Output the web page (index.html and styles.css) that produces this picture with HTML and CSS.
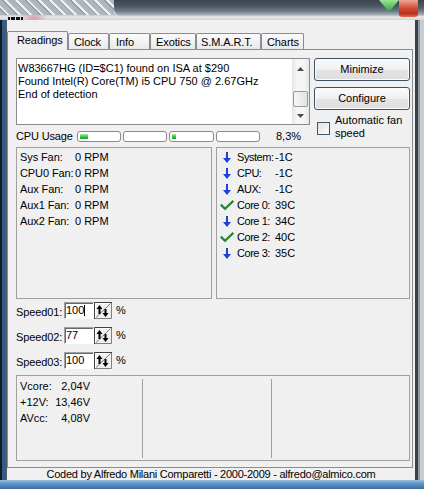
FILE: index.html
```html
<!DOCTYPE html>
<html>
<head>
<meta charset="utf-8">
<title>SpeedFan</title>
<link rel="stylesheet" href="styles.css">
</head>
<body>
<div class="screen">
  <div class="titlebar">
    <div class="glass"><div class="stripes"></div><div class="sysicon"></div></div>
    <div class="darkbar"></div>
    <div class="caption"><span class="gem"></span><span class="closebtn"></span></div>
  </div>
  <div class="middle">
    <div class="frame-left"></div>
    <div class="client">
      <div class="tabs">
        <div class="tab active w-readings">Readings</div>
        <div class="tab w-clock">Clock</div>
        <div class="tab w-info">Info</div>
        <div class="tab w-exotics">Exotics</div>
        <div class="tab w-smart">S.M.A.R.T.</div>
        <div class="tab w-charts">Charts</div>
      </div>
      <div class="sheet">
        <div class="top">
          <div class="leftcol">
            <div class="memo">
              <div class="memo-text">W83667HG (ID=$C1) found on ISA at $290<br>Found Intel(R) Core(TM) i5 CPU 750 @ 2.67GHz<br>End of detection</div>
              <div class="vscroll">
                <div class="sb-up"><svg width="7" height="4" viewBox="0 0 7 4"><path d="M0 4L3.5 0L7 4Z" fill="#4a4a4a"/></svg></div>
                <div class="sb-track"><div class="sb-thumb"></div></div>
                <div class="sb-down"><svg width="7" height="4" viewBox="0 0 7 4"><path d="M0 0L3.5 4L7 0Z" fill="#4a4a4a"/></svg></div>
              </div>
            </div>
            <div class="cpu">
              <span class="cpu-label">CPU Usage</span>
              <div class="bars">
                <div class="bar"><div class="fill" style="width:8px"></div></div>
                <div class="bar"></div>
                <div class="bar wide"><div class="fill" style="width:4px"></div></div>
                <div class="bar"></div>
              </div>
              <span class="pct">8,3%</span>
            </div>
          </div>
          <div class="rightcol">
            <div class="btn">Minimize</div>
            <div class="btn">Configure</div>
            <div class="auto"><span class="chk"></span><span class="auto-label">Automatic fan<br>speed</span></div>
          </div>
        </div>

        <div class="panels">
          <div class="group fans">
            <div class="row"><span class="fl">Sys Fan:</span><span>0 RPM</span></div>
            <div class="row"><span class="fl">CPU0 Fan:</span><span>0 RPM</span></div>
            <div class="row"><span class="fl">Aux Fan:</span><span>0 RPM</span></div>
            <div class="row"><span class="fl">Aux1 Fan:</span><span>0 RPM</span></div>
            <div class="row"><span class="fl">Aux2 Fan:</span><span>0 RPM</span></div>
          </div>
          <div class="group temps">
            <div class="row"><span class="ic"><svg width="8" height="11" viewBox="0 0 8 11"><path d="M3 0h2v6h3l-4 5-4-5h3z" fill="#1d3fdc"/></svg></span><span class="tl">System:</span><span>-1C</span></div>
            <div class="row"><span class="ic"><svg width="8" height="11" viewBox="0 0 8 11"><path d="M3 0h2v6h3l-4 5-4-5h3z" fill="#1d3fdc"/></svg></span><span class="tl">CPU:</span><span>-1C</span></div>
            <div class="row"><span class="ic"><svg width="8" height="11" viewBox="0 0 8 11"><path d="M3 0h2v6h3l-4 5-4-5h3z" fill="#1d3fdc"/></svg></span><span class="tl">AUX:</span><span>-1C</span></div>
            <div class="row"><span class="ic"><svg width="14" height="10" viewBox="0 0 14 10"><path d="M0.8 4.6L5 8.8L13.4 0.8" stroke="#1e8a2e" stroke-width="2.2" fill="none"/></svg></span><span class="tl">Core 0:</span><span>39C</span></div>
            <div class="row"><span class="ic"><svg width="8" height="11" viewBox="0 0 8 11"><path d="M3 0h2v6h3l-4 5-4-5h3z" fill="#1d3fdc"/></svg></span><span class="tl">Core 1:</span><span>34C</span></div>
            <div class="row"><span class="ic"><svg width="14" height="10" viewBox="0 0 14 10"><path d="M0.8 4.6L5 8.8L13.4 0.8" stroke="#1e8a2e" stroke-width="2.2" fill="none"/></svg></span><span class="tl">Core 2:</span><span>40C</span></div>
            <div class="row"><span class="ic"><svg width="8" height="11" viewBox="0 0 8 11"><path d="M3 0h2v6h3l-4 5-4-5h3z" fill="#1d3fdc"/></svg></span><span class="tl">Core 3:</span><span>35C</span></div>
          </div>
        </div>

        <div class="speeds">
          <div class="speed"><span class="sl">Speed01:</span><div class="edit">100<span class="caret"></span></div><svg class="spin" width="18" height="17" viewBox="0 0 18 17"><rect width="18" height="17" fill="#f0f0f0"/><path d="M0.5 17V0.5H18" stroke="#404040" fill="none"/><path d="M1.5 16V1.5H17" stroke="#fff" fill="none"/><path d="M1 16.5H17.5V1" stroke="#808080" fill="none"/><path d="M2 15.5L16.5 1.5" stroke="#7a7a7a"/><path d="M5.5 3L8.5 7H6.5V12H4.5V7H2.5Z" fill="#000"/><path d="M11.5 15L8.5 11H10.5V7H12.5V11H14.5Z" fill="#000"/></svg><span class="pc">%</span></div>
          <div class="speed"><span class="sl">Speed02:</span><div class="edit">77</div><svg class="spin" width="18" height="17" viewBox="0 0 18 17"><rect width="18" height="17" fill="#f0f0f0"/><path d="M0.5 17V0.5H18" stroke="#404040" fill="none"/><path d="M1.5 16V1.5H17" stroke="#fff" fill="none"/><path d="M1 16.5H17.5V1" stroke="#808080" fill="none"/><path d="M2 15.5L16.5 1.5" stroke="#7a7a7a"/><path d="M5.5 3L8.5 7H6.5V12H4.5V7H2.5Z" fill="#000"/><path d="M11.5 15L8.5 11H10.5V7H12.5V11H14.5Z" fill="#000"/></svg><span class="pc">%</span></div>
          <div class="speed"><span class="sl">Speed03:</span><div class="edit">100</div><svg class="spin" width="18" height="17" viewBox="0 0 18 17"><rect width="18" height="17" fill="#f0f0f0"/><path d="M0.5 17V0.5H18" stroke="#404040" fill="none"/><path d="M1.5 16V1.5H17" stroke="#fff" fill="none"/><path d="M1 16.5H17.5V1" stroke="#808080" fill="none"/><path d="M2 15.5L16.5 1.5" stroke="#7a7a7a"/><path d="M5.5 3L8.5 7H6.5V12H4.5V7H2.5Z" fill="#000"/><path d="M11.5 15L8.5 11H10.5V7H12.5V11H14.5Z" fill="#000"/></svg><span class="pc">%</span></div>
        </div>

        <div class="group volts">
          <div class="vcol">
            <div class="vrow"><span class="vl">Vcore:</span><span class="vv">2,04V</span></div>
            <div class="vrow"><span class="vl">+12V:</span><span class="vv">13,46V</span></div>
            <div class="vrow"><span class="vl">AVcc:</span><span class="vv">4,08V</span></div>
          </div>
          <div class="vdiv"></div>
          <div class="vdiv"></div>
        </div>
      </div>
      <div class="footer">Coded by Alfredo Milani Comparetti - 2000-2009 - alfredo@almico.com</div>
    </div>
    <div class="frame-right"></div>
  </div>
  <div class="taskbar"></div>
</div>
</body>
</html>
```
FILE: styles.css
```css
* { box-sizing: border-box; margin: 0; padding: 0; }
html, body { width: 424px; height: 489px; overflow: hidden; }
body {
  background: #f0f0f0;
  font-family: "Liberation Sans", Arial, sans-serif;
  font-size: 11px;
  line-height: 13px;
  color: #000;
}
.screen { width: 424px; height: 489px; display: flex; flex-direction: column; overflow: hidden; }

/* title bar */
.titlebar {
  height: 20px; flex: none; display: flex; align-items: flex-start;
  background:
    radial-gradient(ellipse 14px 5px at 34px 18px, rgba(214,150,160,0.9), rgba(214,150,160,0) 100%),
    linear-gradient(#c9ced3 0, #c9ced3 15px, #e8e8e8 17px, #d2d2d2 20px);
}
.glass { width: 114px; display: flex; flex-direction: column; }
.stripes {
  height: 15px;
  background: repeating-linear-gradient(45deg, #aeb5bc 0 4px, #949ca4 4px 5px, #eef0f2 5px 7px, #b8bec4 7px 8px);
}
.sysicon {
  width: 15px; height: 4px; margin: 2px 0 0 8px;
  background: repeating-linear-gradient(90deg, #111 0 2px, #ddd 2px 3px, #111 3px 5px);
}
.darkbar {
  flex: 1; height: 17px;
  background: linear-gradient(#3a4450, #4a5662 35%, #6c7884 65%, #a8b1ba 88%, #eef0f2);
  border-bottom-left-radius: 9px;
}
.caption {
  width: 43px; height: 17px; display: flex; align-items: flex-start;
  background: linear-gradient(#3a4450, #4a5662 35%, #6c7884 65%, #a8b1ba 88%, #eef0f2);
}
.gem {
  width: 20px; height: 12px; margin-left: -2px;
  background: linear-gradient(#9be696, #2f9e3c);
  clip-path: polygon(0 0, 100% 0, 50% 100%);
}
.closebtn {
  width: 19px; height: 17px;
  background: linear-gradient(#eaa694, #d24a30 50%, #b5301b 80%, #e0704f);
  border-radius: 0 0 3px 3px;
}

/* middle */
.middle { height: 460px; flex: none; display: flex; }
.frame-left { width: 7px; background: linear-gradient(90deg, #121a22 0 2px, #2f5d88 2px 5px, #4f5963 5px 7px); }
.frame-right { width: 9px; background: linear-gradient(90deg, #3a4048 0 3px, #8f9aa5 3px 5px, #c6cdd4 5px 9px); }
.client { width: 408px; display: flex; flex-direction: column; background: #f0f0f0; }
.taskbar { height: 9px; flex: none; background: linear-gradient(#9cc0e2, #6797c8 35%, #3d70a6); }

/* tabs */
.tabs { height: 29px; flex: none; display: flex; align-items: flex-end; position: relative; z-index: 1; }
.tab {
  height: 16px; padding: 2px 0 0 5px;
  border: 1px solid #898c95; border-bottom: none;
  border-radius: 2px 2px 0 0;
  background: linear-gradient(#fbfbfb, #e9e9e9);
  white-space: nowrap;
  letter-spacing: -0.1px;
}
.tab.active { height: 19px; margin-bottom: -1px; background: #f0f0f0; padding-left: 9px; }
.w-readings { width: 61px; }
.w-clock { width: 41px; }
.w-info { width: 41px; padding-left: 6px; }
.w-exotics { width: 46px; }
.w-smart { width: 65px; padding-left: 4px; }
.w-charts { width: 43px; padding-left: 5px; }

.sheet {
  width: 406px; height: 419px; flex: none;
  border: 1px solid #898c95;
  padding: 8px 2px 6px 8px;
  display: flex; flex-direction: column;
  background: #f0f0f0;
}

/* top area */
.top { display: grid; grid-template-columns: 294px 96px; column-gap: 4px; height: 84px; }
.memo { height: 67px; border: 1px solid #8a8d93; background: #fff; display: flex; }
.memo-text { flex: 1; padding: 3px 0 0 1px; white-space: nowrap; overflow: hidden; }
.vscroll {
  width: 17px; display: flex; flex-direction: column;
  background: linear-gradient(90deg, #e6e6e6, #f6f6f6 30%, #f6f6f6 70%, #e6e6e6);
}
.sb-up { height: 20px; display: flex; align-items: center; justify-content: center; }
.sb-track { flex: 1; display: flex; flex-direction: column; justify-content: flex-end; }
.sb-thumb {
  height: 16px; margin: 0 1px;
  border: 1px solid #9a9a9a; border-radius: 2px;
  background: linear-gradient(90deg, #f7f7f7, #e2e2e2);
}
.sb-down { height: 17px; display: flex; align-items: center; justify-content: center; }

.cpu { display: flex; align-items: center; height: 11px; margin-top: 6px; white-space: nowrap; }
.cpu-label { width: 61px; letter-spacing: -0.15px; }
.bars { display: flex; gap: 2px; }
.bar {
  width: 44px; height: 11px;
  border: 1px solid #8a8a8a; border-radius: 3px;
  background: #fff; padding: 2px 0 2px 2px;
}
.bar.wide { width: 45px; }
.fill { height: 5px; background: linear-gradient(#a8f2a2, #2fbf3e 60%, #1f9a2c); }
.pct { margin-left: 16px; }

.rightcol { display: flex; flex-direction: column; }
.btn {
  height: 23px; flex: none;
  border: 1px solid #3d4f64; border-radius: 3px;
  background: linear-gradient(#fafafa, #f0f0f0 50%, #e4e4e4 51%, #dedede);
  box-shadow: inset 0 0 0 1px #fdfdfd;
  display: flex; align-items: center; justify-content: center;
}
.btn + .btn { margin-top: 6px; }
.auto { display: flex; margin-top: 3px; padding-left: 3px; }
.chk {
  width: 13px; height: 13px; flex: none; margin-top: 9px;
  border: 1px solid #40566c;
  background: linear-gradient(135deg, #e2e2e2, #fbfbfb);
}
.auto-label { margin-left: 5px; padding-top: 1px; }

/* panels */
.panels { display: grid; grid-template-columns: 196px 194px; column-gap: 4px; height: 152px; margin-top: 5px; }
.group { border: 1px solid #a0a0a0; }
.fans { padding: 1px 0 0 3px; }
.temps { padding: 1px 0 0 2px; }
.row { height: 16px; line-height: 16px; display: flex; align-items: center; white-space: nowrap; }
.fl { width: 55px; letter-spacing: -0.1px; }
.ic { width: 16px; height: 16px; display: flex; align-items: center; justify-content: center; }
.tl { width: 38px; margin-left: 2px; letter-spacing: -0.45px; }

/* speeds */
.speeds { margin-top: 3px; display: flex; flex-direction: column; gap: 8px; }
.speed { height: 17px; display: flex; align-items: center; white-space: nowrap; }
.sl { width: 48px; padding-top: 3px; letter-spacing: -0.1px; }
.edit {
  width: 30px; height: 17px;
  background: #fff;
  border: 1px solid; border-color: #a0a0a0 #fff #fff #a0a0a0;
  box-shadow: inset 1px 1px 0 #696969;
  padding-left: 1px; line-height: 15px;
  display: flex; align-items: center;
}
.caret { width: 1px; height: 11px; background: #000; }
.spin { display: block; flex: none; }
.pc { margin-left: 4px; }

/* voltages */
.volts { margin-top: 6px; height: 86px; display: grid; grid-template-columns: 125px 129px 1fr; }
.vcol { padding: 2px 0 0 3px; }
.vdiv { border-left: 1px solid #a0a0a0; margin: 3px 0 2px; }
.vrow { height: 16px; line-height: 16px; display: flex; white-space: nowrap; }
.vl { width: 35px; }
.vv { width: 35px; text-align: right; }

.footer {
  height: 12px; flex: none; overflow: hidden;
  text-align: center; white-space: nowrap; line-height: 13px;
  letter-spacing: -0.25px;
}
```
